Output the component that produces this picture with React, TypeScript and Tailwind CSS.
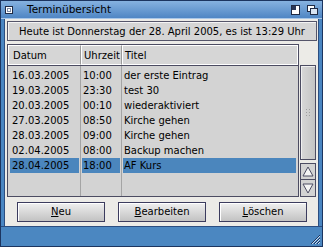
import React from 'react';

const rows = [
  { date: '16.03.2005', time: '10:00', title: 'der erste Eintrag' },
  { date: '19.03.2005', time: '23:30', title: 'test 30' },
  { date: '20.03.2005', time: '00:10', title: 'wiederaktiviert' },
  { date: '27.03.2005', time: '08:50', title: 'Kirche gehen' },
  { date: '28.03.2005', time: '09:00', title: 'Kirche gehen' },
  { date: '02.04.2005', time: '08:00', title: 'Backup machen' },
  { date: '28.04.2005', time: '18:00', title: 'AF Kurs', selected: true },
];

function Btn({ hot, rest }: { hot: string; rest: string }) {
  return (
    <button className="w-[88px] h-[20px] border border-[#3c3c5e] bg-gradient-to-b from-[#f0f0f0] to-[#c2c2c2] text-[10px] text-black leading-none flex items-center justify-center shadow-[inset_1px_1px_0_#ffffff]">
      <span className="underline underline-offset-1">{hot}</span>
      {rest}
    </button>
  );
}

export default function App() {
  return (
    <div
      className="w-[323px] h-[247px] flex flex-col bg-[#4a86c2] border border-[#1c3560] overflow-hidden"
      style={{ fontFamily: '"DejaVu Sans", Verdana, sans-serif' }}
    >
      {/* title bar */}
      <div className="h-[18px] shrink-0 flex items-center bg-gradient-to-b from-[#86b2e0] to-[#4f86c4] border-b border-[#a9c7e8]">
        <div className="ml-[4px] w-[8px] h-[8px] border border-[#1f2a44] bg-white flex items-center justify-center">
          <div className="w-[4px] h-[4px] border border-[#7d8aa6]" />
        </div>
        <span className="ml-[14px] text-[10.5px] text-black leading-none">Terminübersicht</span>
        <div className="ml-auto flex items-center gap-[7px] mr-[4px]">
          <svg width="9" height="10" viewBox="0 0 9 10">
            <rect x="0.5" y="0.5" width="8" height="9" fill="#fff" stroke="#1f2a44" />
            <rect x="1" y="1" width="4" height="4" fill="#2a3656" />
          </svg>
          <svg width="11" height="10" viewBox="0 0 11 10">
            <rect x="0.5" y="0.5" width="7" height="6" fill="#fff" stroke="#1f2a44" />
            <rect x="3.5" y="3.5" width="7" height="6" fill="#d8e4f2" stroke="#1f2a44" />
          </svg>
        </div>
      </div>

      {/* content */}
      <div className="flex-1 mx-[3px] bg-[#ecebe7] border-x border-[#2c4e80] flex flex-col pl-[2px] pr-[1px] pt-[2px]">
        <div className="h-[20px] border border-[#55556a] bg-[#d5d5d5] shadow-[inset_1px_1px_0_#f4f4f4] flex items-center justify-center text-[10px] text-black">
          Heute ist Donnerstag der 28. April 2005, es ist 13:29 Uhr
        </div>

        <div className="mt-[3px] flex h-[153px]">
          {/* list */}
          <div className="w-[292px] border border-[#4c4c62] bg-[#d3d3d3] flex flex-col">
            <div className="h-[20px] flex text-[10px] text-black bg-[#d6d6d6]">
              <div className="w-[73px] border border-white border-r-[#9a9a9a] flex items-center pl-[4px]">Datum</div>
              <div className="w-[41px] border border-white border-r-[#9a9a9a] flex items-center pl-[2px]">Uhrzeit</div>
              <div className="flex-1 border border-white flex items-center pl-[2px]">Titel</div>
            </div>
            <div className="flex-1 flex border-t border-[#4c4c62] text-[10px] text-black">
              <div className="w-[73px] border-r border-[#a4a4a4] pt-[2px] pl-[2px] pr-[1px]">
                {rows.map(r => (
                  <div key={r.date + r.time} className={`h-[15px] flex items-center pl-[2px] ${r.selected ? 'bg-[#4b86bd]' : ''}`}>{r.date}</div>
                ))}
              </div>
              <div className="w-[41px] border-r border-[#a4a4a4] pt-[2px] px-[1px]">
                {rows.map(r => (
                  <div key={r.date + r.time} className={`h-[15px] flex items-center pl-[1px] ${r.selected ? 'bg-[#4b86bd]' : ''}`}>{r.time}</div>
                ))}
              </div>
              <div className="flex-1 pt-[2px] pl-[1px] pr-[2px]">
                {rows.map(r => (
                  <div key={r.date + r.time} className={`h-[15px] flex items-center pl-[1px] ${r.selected ? 'bg-[#4b86bd]' : ''}`}>{r.title}</div>
                ))}
              </div>
            </div>
          </div>

          {/* scrollbar */}
          <div className="ml-[1px] w-[16px] mt-[21px] flex flex-col">
            <div className="h-[96px] border border-[#4c4c62] bg-gradient-to-r from-[#d8d8d8] to-[#c4c4c4] shadow-[inset_1px_1px_0_#f0f0f0] flex items-center justify-center">
              <svg width="6" height="8" viewBox="0 0 6 8">
                {[0, 3].map(x => [0, 3, 6].map(y => (
                  <rect key={`${x}-${y}`} x={x + 1} y={y} width="1" height="1" fill="#a0a0a0" />
                )))}
              </svg>
            </div>
            <div className="mt-[3px] h-[17px] border border-[#4c4c62] bg-[#d3d3d3] flex items-center justify-center">
              <svg width="12" height="11" viewBox="0 0 12 11">
                <path d="M6 1 L11 10 L1 10 Z" fill="#f4f4f4" stroke="#4c4c62" />
              </svg>
            </div>
            <div className="h-[17px] border border-t-0 border-[#4c4c62] bg-[#d3d3d3] flex items-center justify-center">
              <svg width="12" height="11" viewBox="0 0 12 11">
                <path d="M1 1 L11 1 L6 10 Z" fill="#f4f4f4" stroke="#4c4c62" />
              </svg>
            </div>
          </div>
        </div>

        <div className="mt-[5px] flex justify-between pl-[10px] pr-[10px]">
          <Btn hot="N" rest="eu" />
          <Btn hot="B" rest="earbeiten" />
          <Btn hot="L" rest="öschen" />
        </div>
      </div>

      {/* bottom bar */}
      <div className="h-[20px] shrink-0 border-t border-[#2c4e80] bg-[#4b87c1] flex items-end justify-end pr-[1px] pb-[1px]">
        <svg width="11" height="11" viewBox="0 0 11 11">
          <path d="M10 1 L1 10 M10 4 L4 10 M10 7 L7 10" stroke="#1c3560" strokeWidth="1" />
          <path d="M10 2 L2 10 M10 5 L5 10 M10 8 L8 10" stroke="#c8dcf0" strokeWidth="1" />
        </svg>
      </div>
    </div>
  );
}
